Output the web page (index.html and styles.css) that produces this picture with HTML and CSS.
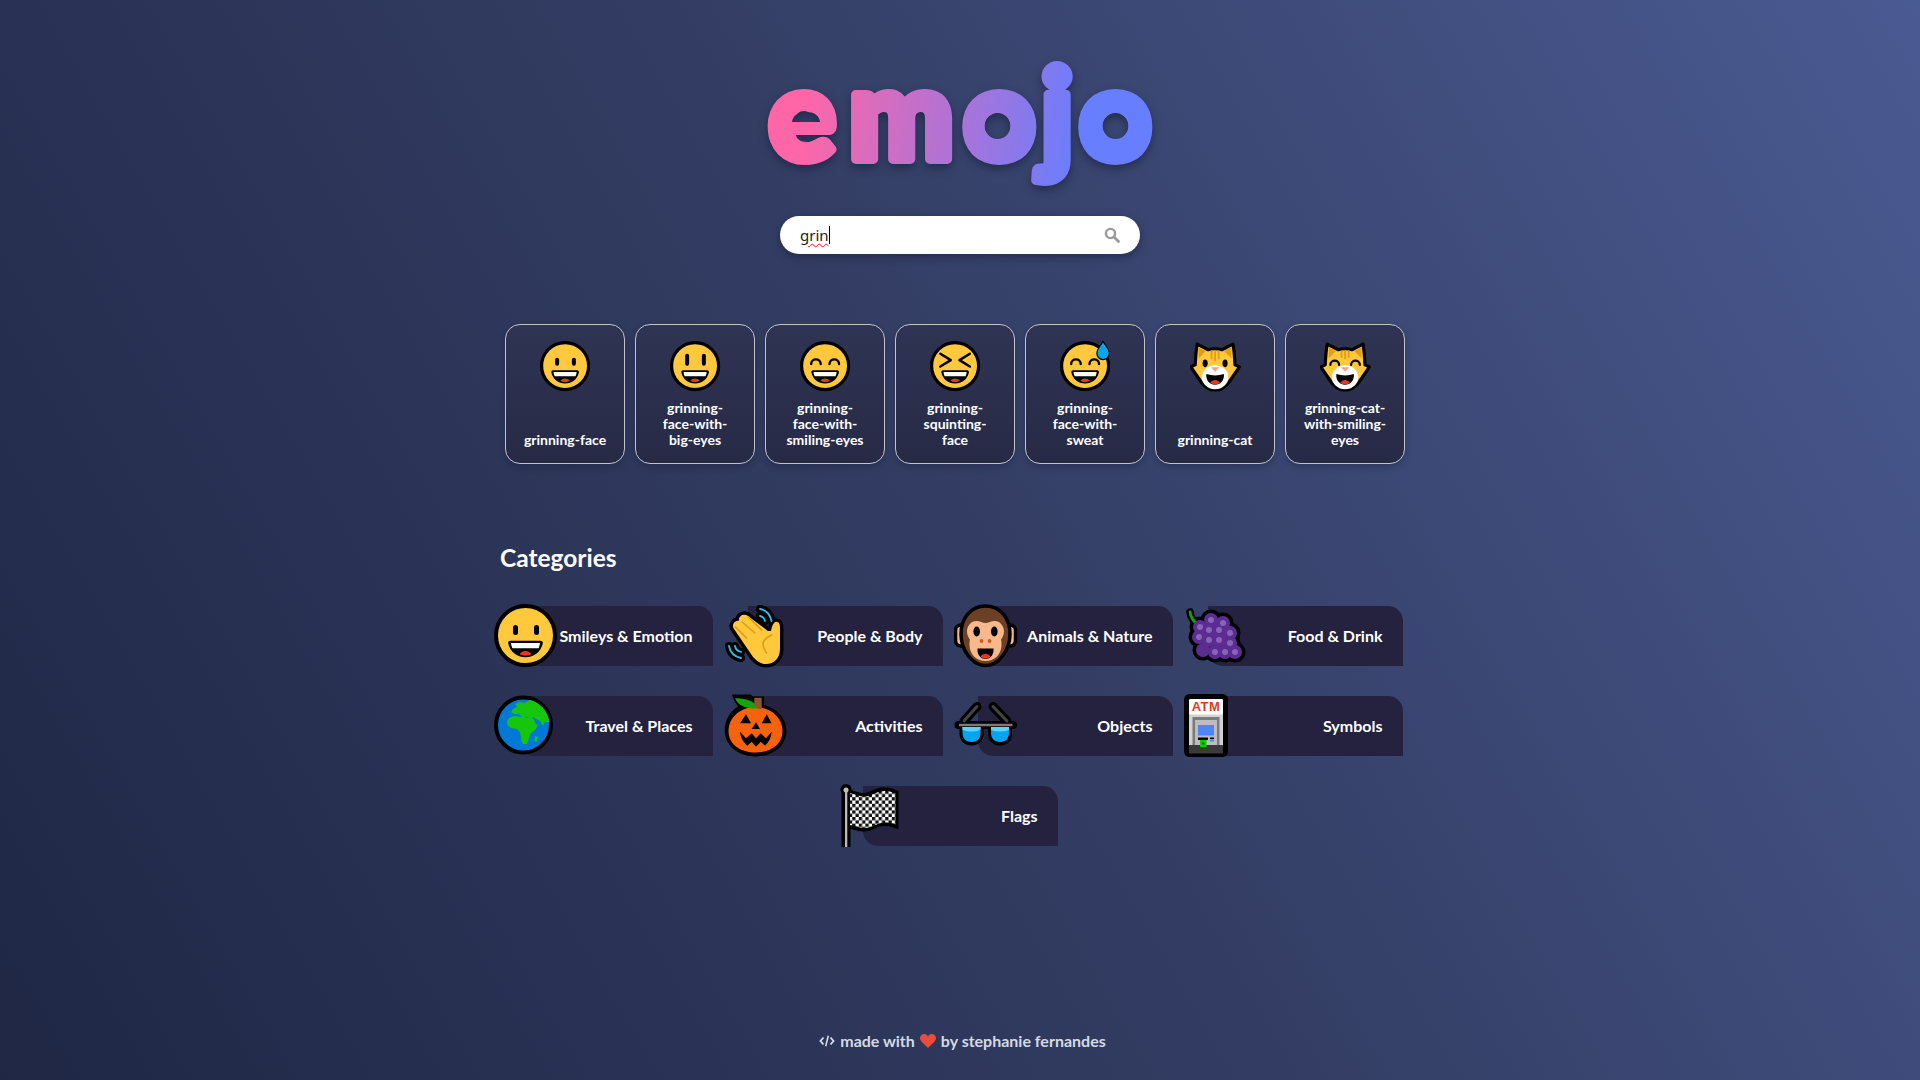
FILE: index.html
```html
<!DOCTYPE html>
<html lang="en">
<head>
<meta charset="utf-8">
<title>emojo</title>
<link rel="stylesheet" href="styles.css">
</head>
<body>
<svg class="defs" width="0" height="0" aria-hidden="true">
  <defs>
    <pattern id="check" width="6.6" height="6.6" patternUnits="userSpaceOnUse">
      <rect width="6.6" height="6.6" fill="#fff"/>
      <rect width="3.3" height="3.3" fill="#111"/>
      <rect x="3.3" y="3.3" width="3.3" height="3.3" fill="#111"/>
    </pattern>
    <clipPath id="globe"><circle cx="29.5" cy="31" r="26"/></clipPath>

    <symbol id="mouth" viewBox="0 0 64 64">
      <path d="M16.500 36.800h30c1.800 0 2.600 1.200 2.200 3-1.800 7.800-8.500 13.500-17.200 13.500s-15.400-5.700-17.200-13.500c-.4-1.800.4-3 2.200-3z" fill="#000"/>
      <path d="M17.500 39h28c.4 0 .6.300.5.700-.3 1.600-.8 3.100-1.400 4.500H18.400c-.6-1.400-1.100-2.900-1.400-4.500-.1-.4.100-.7.500-.7z" fill="#fff"/>
      <path d="M25.500 50c1.600-2 3.700-3 6-3s4.400 1 6 3c-1.800 1.100-3.800 1.700-6 1.700s-4.200-.6-6-1.700z" fill="#e5391f"/>
    </symbol>

    <symbol id="e-face" viewBox="0 0 64 64">
      <circle cx="31.500" cy="31.500" r="29.500" fill="#ffc83d" stroke="#000" stroke-width="4"/>
      <rect x="19" y="21" width="5" height="10" rx="2.500"/>
      <rect x="40" y="21" width="5" height="10" rx="2.500"/>
      <use href="#mouth" width="64" height="64"/>
    </symbol>
    <symbol id="e-bigeyes" viewBox="0 0 64 64">
      <circle cx="31.500" cy="31.500" r="29.500" fill="#ffc83d" stroke="#000" stroke-width="4"/>
      <rect x="19" y="16" width="5" height="15" rx="2.500"/>
      <rect x="40" y="16" width="5" height="15" rx="2.500"/>
      <use href="#mouth" width="64" height="64"/>
    </symbol>
    <symbol id="e-smile" viewBox="0 0 64 64">
      <circle cx="31.500" cy="31.500" r="29.500" fill="#ffc83d" stroke="#000" stroke-width="4"/>
      <path d="M14 29c0-8 12-8 12 0M37 29c0-8 12-8 12 0" fill="none" stroke="#000" stroke-width="3" stroke-linecap="round"/>
      <use href="#mouth" width="64" height="64"/>
    </symbol>
    <symbol id="e-squint" viewBox="0 0 64 64">
      <circle cx="31.500" cy="31.500" r="29.500" fill="#ffc83d" stroke="#000" stroke-width="4"/>
      <path d="M13 16l13 8-13 8M50 16l-13 8 13 8" fill="none" stroke="#000" stroke-width="3.200" stroke-linecap="round" stroke-linejoin="round"/>
      <use href="#mouth" width="64" height="64"/>
    </symbol>
    <symbol id="e-sweat" viewBox="0 0 64 64">
      <circle cx="31.500" cy="31.500" r="29.500" fill="#ffc83d" stroke="#000" stroke-width="4"/>
      <path d="M14 29c0-8 12-8 12 0M37 29c0-8 12-8 12 0" fill="none" stroke="#000" stroke-width="3" stroke-linecap="round"/>
      <use href="#mouth" width="64" height="64"/>
      <path d="M54 2c-3 5-7 9-7 13.500a7 7 0 0 0 14 0c0-4.500-4-8.500-7-13.500z" fill="#00a8e8" stroke="#000" stroke-width="3" paint-order="stroke"/>
    </symbol>
    <symbol id="e-cat" viewBox="0 0 64 64">
      <path d="M9 4l14 7c5-1.500 12-1.500 17 0l14-7c1.500 8 2 17 2.500 26L62 32.500 48 53c-4 5-10 8.500-16.500 8.500S19 58 15 53L1 32.500 6.500 30C7 21 7.500 12 9 4z" fill="#ffc83d" stroke="#000" stroke-width="4" stroke-linejoin="round"/>
      <path d="M11 8l9 4.500-9 9zM52 8l-9 4.500 9 9z" fill="#e59b12"/>
      <path d="M27 12v11M31.500 12v13M36 12v11" stroke="#e59b12" stroke-width="2.200"/>
      <ellipse cx="31.500" cy="45.500" rx="16.500" ry="15" fill="#fff"/>
      <ellipse cx="19" cy="28" rx="3.200" ry="4.800"/>
      <ellipse cx="44" cy="28" rx="3.200" ry="4.800"/>
      <path d="M26.500 33h10l-5 6z" fill="#f7a184"/>
      <path d="M20.500 41.500q11 3.500 22 0c1 8-4.500 13.500-11 13.500s-12-5.500-11-13.500z"/>
      <path d="M25.500 52.500c1.600-2.500 3.700-3.500 6-3.500s4.400 1 6 3.500c-1.800 1.500-3.800 2-6 2s-4.200-.5-6-2z" fill="#e5391f"/>
    </symbol>
    <symbol id="e-catsmile" viewBox="0 0 64 64">
      <path d="M9 4l14 7c5-1.500 12-1.500 17 0l14-7c1.500 8 2 17 2.500 26L62 32.500 48 53c-4 5-10 8.500-16.500 8.500S19 58 15 53L1 32.500 6.500 30C7 21 7.500 12 9 4z" fill="#ffc83d" stroke="#000" stroke-width="4" stroke-linejoin="round"/>
      <path d="M11 8l9 4.500-9 9zM52 8l-9 4.500 9 9z" fill="#e59b12"/>
      <path d="M27 12v9M31.500 12v11M36 12v9" stroke="#e59b12" stroke-width="2.200"/>
      <ellipse cx="31.500" cy="45.500" rx="16.500" ry="15" fill="#fff"/>
      <path d="M13 30c0-7 11-7 11 0M39 30c0-7 11-7 11 0" fill="none" stroke="#000" stroke-width="2.800" stroke-linecap="round"/>
      <path d="M26.500 33h10l-5 6z" fill="#f7a184"/>
      <path d="M20.500 41.500q11 3.500 22 0c1 8-4.500 13.500-11 13.500s-12-5.500-11-13.500z"/>
      <path d="M25.500 52.500c1.600-2.500 3.700-3.500 6-3.500s4.400 1 6 3.500c-1.800 1.500-3.800 2-6 2s-4.200-.5-6-2z" fill="#e5391f"/>
    </symbol>

    <symbol id="i-hand" viewBox="0 0 64 64">
      <g fill="none" stroke="#000" stroke-width="8" stroke-linecap="round">
        <path d="M36 5c6 1 10 5 11.500 12M36 12c2.500.5 4.500 2.500 5 5M5 42c1 6 5 10.500 12 12M11 42c.5 3 2.500 5 6 6"/>
      </g>
      <path d="M10 25C7 21 11 16 15 17 14 12 20 9 24 12L44 27 47 27C48 22 50 17 53 18 56 18 56 22 56 25V45C56 54 50 60 42 60 36 60 33 57 29 53Z" fill="#ffc83d" stroke="#000" stroke-width="7" stroke-linejoin="round" paint-order="stroke"/>
      <path d="M11.500 23l11 11M18 18l13 11M24.500 13l13 13M47.500 31c-6 3-9 6-8.500 10 .3 3 1.700 5 3.500 8" fill="none" stroke="#e09a14" stroke-width="1.500" stroke-linecap="round"/>
      <path d="M36 5c6 1 10 5 11.500 12M36 12c2.500.5 4.500 2.500 5 5M5 42c1 6 5 10.500 12 12M11 42c.5 3 2.500 5 6 6" fill="none" stroke="#2cbde8" stroke-width="1.800" stroke-linecap="round"/>
    </symbol>
    <symbol id="i-monkey" viewBox="0 0 64 64">
      <rect x="1.500" y="21" width="11" height="21" rx="5.500" fill="#f7b88b" stroke="#000" stroke-width="3.500"/>
      <rect x="50.500" y="21" width="11" height="21" rx="5.500" fill="#f7b88b" stroke="#000" stroke-width="3.500"/>
      <path d="M31.500 2C47 2 56 15 56 30 56 47 44 61.500 31.500 61.500S7 47 7 30C7 15 16 2 31.500 2Z" fill="#6b4024" stroke="#000" stroke-width="3.500"/>
      <path d="M22.500 17c3.500 0 6 2 9 2s5.500-2 9-2c5.500 0 9.500 5 9.500 10.500 0 3.500-1.500 6-3 8 .5 1.500.5 4 .5 5.500 0 9-6.500 16-16 16S15.500 50 15.500 41c0-1.500 0-4 .5-5.500-1.500-2-3-4.500-3-8C13 22 17 17 22.500 17Z" fill="#f7b88b"/>
      <ellipse cx="22.700" cy="27.500" rx="3.300" ry="5"/>
      <ellipse cx="40.300" cy="27.500" rx="3.300" ry="5"/>
      <circle cx="27.500" cy="37" r="1.900" fill="#d5582a"/>
      <circle cx="35.500" cy="37" r="1.900" fill="#d5582a"/>
      <path d="M23.500 44.500h16c.5 6-3 10.500-8 10.500s-8.500-4.500-8-10.500z"/>
      <path d="M26.500 52.500c1.500-2 3-2.800 5-2.800s3.500.8 5 2.800c-1.500 1.500-3 2.200-5 2.200s-3.500-.7-5-2.200z" fill="#e5391f"/>
    </symbol>
    <symbol id="i-grapes" viewBox="0 0 64 64">
      <path d="M6 8c.5 5 3 9 8 13" fill="none" stroke="#000" stroke-width="7.500" stroke-linecap="round"/>
      <g fill="#000" stroke="#000" stroke-width="7">
        <circle cx="16" cy="23" r="7"/><circle cx="27" cy="16" r="7"/><circle cx="39" cy="19" r="7"/>
        <circle cx="25" cy="26" r="7"/><circle cx="35" cy="26" r="7"/><circle cx="46" cy="29" r="7"/>
        <circle cx="15" cy="33" r="7"/><circle cx="25" cy="36" r="7"/><circle cx="35" cy="36" r="7"/><circle cx="46" cy="39" r="7"/>
        <circle cx="19" cy="46" r="7"/><circle cx="31" cy="48" r="7"/><circle cx="41" cy="48" r="7"/><circle cx="51" cy="48" r="7"/>
      </g>
      <path d="M6 8c.5 5 3 9 8 13" fill="none" stroke="#13a10e" stroke-width="2.800" stroke-linecap="round"/>
      <g fill="#5c2d91">
        <circle cx="16" cy="23" r="7"/><circle cx="27" cy="16" r="7"/><circle cx="39" cy="19" r="7"/>
        <circle cx="25" cy="26" r="7"/><circle cx="35" cy="26" r="7"/><circle cx="46" cy="29" r="7"/>
        <circle cx="15" cy="33" r="7"/><circle cx="25" cy="36" r="7"/><circle cx="35" cy="36" r="7"/><circle cx="46" cy="39" r="7"/>
        <circle cx="19" cy="46" r="7"/><circle cx="31" cy="48" r="7"/><circle cx="41" cy="48" r="7"/><circle cx="51" cy="48" r="7"/>
      </g>
      <g fill="#8764b8">
        <circle cx="16" cy="23" r="3"/><circle cx="27" cy="16" r="3"/><circle cx="39" cy="19" r="3"/>
        <circle cx="25" cy="26" r="3"/><circle cx="35" cy="26" r="3"/><circle cx="46" cy="29" r="3"/>
        <circle cx="15" cy="33" r="3"/><circle cx="25" cy="36" r="3"/><circle cx="35" cy="36" r="3"/><circle cx="46" cy="39" r="3"/>
        <circle cx="31" cy="48" r="3"/><circle cx="41" cy="48" r="3"/><circle cx="51" cy="48" r="3"/>
      </g>
    </symbol>
    <symbol id="i-earth" viewBox="0 0 64 64">
      <circle cx="29.500" cy="31" r="27.500" fill="#0078d7" stroke="#000" stroke-width="4"/>
      <g clip-path="url(#globe)" fill="#16c60c">
        <path d="M13 27l2-3 5-2 6 1 2-1 5 2 3-1 4 2 1 4 3 2-3 5-4 3-2 5-2 6-4 0-2-4-1-8-3-3-6-1-3-2-1-3z"/>
        <path d="M19 15l4-2-2-3 5-2 5 1 4-3 6-1 13 9 5 11-3 3-5 0-2 4-3-5-4-2-3-2-2 2-4-2-5 0-3-3-5 0-3-2z"/>
        <path d="M41 42l3 1-1.500 5-2-1z"/>
      </g>
    </symbol>
    <symbol id="i-pumpkin" viewBox="0 0 64 64">
      <path d="M8 .5h18.500l2.500 2h11V11C52 14 62.500 24 62.500 37 62.500 51 49 62.500 31.500 62.500S.7 51 .7 37C.7 24 8 16 14 12.500 11 8 8.500 4 8 .5Z" fill="#000"/>
      <path d="M31.500 13C46 13 58.500 23 58.500 37S46 58.500 31.500 58.500 4.500 51 4.500 37 17 13 31.500 13Z" fill="#f7630c"/>
      <path d="M11 4.300c9 0 19 2 24 10-9 1-20-.5-24-10z" fill="#16a30c"/>
      <path d="M30.300 3.700h7.400v11.500l-3.500-.5-3.900-4.500z" fill="#8e562e"/>
      <path d="M16 29.300l6-9 5 9zM37.700 29.300l5-9 5 9zM27.700 35l4.300-6.700 4 6.700z"/>
      <path d="M16 37.700l6 6.600 5.700-5 4.300 5 4.700-5 5.300 5 5.700-6.600c-.5 5.500-2.700 10.500-6.700 14l-4.300-4-4.700 5-4.300-5-4.400 4c-4-3.500-6.800-8.500-7.300-14z"/>
    </symbol>
    <symbol id="i-glasses" viewBox="0 0 64 64">
      <path d="M10 27L23 12.500M53 27L39 12.500" fill="none" stroke="#000" stroke-width="9" stroke-linecap="round"/>
      <path d="M4.500 31H59" fill="none" stroke="#000" stroke-width="8" stroke-linecap="round"/>
      <path d="M5.500 33h24v6.500c0 7-4.500 12-12 12s-12-5-12-12zM34 33h24v6.500c0 7-4.500 12-12 12s-12-5-12-12z" fill="#000"/>
      <path d="M10 27L23 12.500M53 27L39 12.500" fill="none" stroke="#444" stroke-width="3" stroke-linecap="round"/>
      <path d="M5 31H58.500" fill="none" stroke="#7a7a7a" stroke-width="2.600"/>
      <path d="M8.500 33h18v6c0 5-3 9-9 9s-9-4-9-9zM37 33h18v6c0 5-3 9-9 9s-9-4-9-9z" fill="#00a6f0"/>
      <path d="M8.500 33h18v3c-6 2-12 2-18 0zM37 33h18v3c-6 2-12 2-18 0z" fill="#5fd0ff"/>
    </symbol>
    <symbol id="i-atm" viewBox="0 0 64 64">
      <rect x="1.500" y="1.500" width="41" height="60" rx="4" fill="#000" stroke="#000" stroke-width="3"/>
      <rect x="5" y="5" width="34" height="47" rx="1.500" fill="#d2d2d2"/>
      <rect x="5" y="5" width="34" height="15.500" rx="1.500" fill="#fff"/>
      <text x="22" y="17" class="atm-text">ATM</text>
      <rect x="8.500" y="23" width="27" height="29" fill="#7b7b7b"/>
      <rect x="11" y="26" width="22" height="26" fill="#bdbdbd"/>
      <rect x="14" y="31" width="16" height="10.500" fill="#4a86f7"/>
      <rect x="14" y="43.500" width="10" height="2.500"/>
      <rect x="26" y="43.500" width="4" height="1.500"/>
      <rect x="26" y="45.500" width="4" height="2" fill="#4a86f7"/>
      <rect x="5" y="51" width="34" height="8.500" fill="#3a3a3a"/>
      <rect x="16" y="46" width="6.500" height="7" fill="#16c60c"/>
      <circle cx="19.200" cy="49.500" r="1.300" fill="#0c7a08"/>
    </symbol>
    <symbol id="i-flag" viewBox="0 0 64 64">
      <rect x="2.500" y="3" width="9" height="60" fill="#000"/>
      <circle cx="7" cy="5.500" r="5.500" fill="#000"/>
      <path d="M9 5.500c6 .5 11 4 17 3.500C32 8 37 3 46 3.500c5 .2 9 1.500 13.500 3.500V45.500c-5-2.500-9-3.500-14-3.500-8 0-12 5-19 5.500-6.500.5-12-2.500-17.500-3z" fill="#000"/>
      <path d="M11 9c5 1 10 4 16 3.500C33 11.500 38 7 46 7c4 0 7.500 1 10.500 2.500V40.500c-3-1.500-7-2-11-2-7 .5-12 5-18.500 5.500-5.500.3-10.500-2-16-3z" fill="url(#check)"/>
      <rect x="6" y="8" width="2.300" height="55" fill="#bababa"/>
      <circle cx="7" cy="6" r="2.500" fill="#bdbdbd"/>
    </symbol>
  </defs>
</svg>

<header class="brand">
  <svg class="logo" viewBox="0 0 400 150" width="400" height="150" role="img" aria-label="emojo">
    <defs>
      <linearGradient id="logograd" gradientUnits="userSpaceOnUse" x1="45" y1="60" x2="325" y2="100">
        <stop offset="0" stop-color="#ff66a8"/>
        <stop offset="1" stop-color="#667eff"/>
      </linearGradient>
      <mask id="logoholes" maskUnits="userSpaceOnUse" x="-20" y="-20" width="440" height="190">
        <rect x="-20" y="-20" width="440" height="190" fill="#fff"/>
        <circle cx="237.500" cy="76" r="13"/>
        <circle cx="355.500" cy="76" r="13"/>
        <path d="M32 72C33 65 38 62 46 62S59 65 60 72Z"/>
      </mask>
    </defs>
    <text class="logo-text" y="109" x="9 89 203.500 281 319.500" mask="url(#logoholes)">emojo</text>
    <circle class="logo-ring" cx="237.500" cy="76" r="19"/>
    <circle class="logo-ring" cx="355.500" cy="76" r="19"/>
  </svg>
  <div class="search">
    <span class="search-value">grin</span><span class="caret"></span>
    <svg class="search-icon" viewBox="0 0 16 16" width="16" height="16" aria-hidden="true">
      <circle cx="6.500" cy="6.500" r="4.600" fill="none" stroke="#9a9a9a" stroke-width="2.400"/>
      <path d="M10 10l4.500 4.500" stroke="#9a9a9a" stroke-width="2.800" stroke-linecap="round"/>
    </svg>
  </div>
</header>

<section class="results">
  <article class="card"><svg class="card-emoji"><use href="#e-face"/></svg><p class="card-label">grinning-face</p></article>
  <article class="card"><svg class="card-emoji"><use href="#e-bigeyes"/></svg><p class="card-label">grinning-face-with-big-eyes</p></article>
  <article class="card"><svg class="card-emoji"><use href="#e-smile"/></svg><p class="card-label">grinning-face-with-smiling-eyes</p></article>
  <article class="card"><svg class="card-emoji"><use href="#e-squint"/></svg><p class="card-label">grinning-squinting-face</p></article>
  <article class="card"><svg class="card-emoji"><use href="#e-sweat"/></svg><p class="card-label">grinning-face-with-sweat</p></article>
  <article class="card"><svg class="card-emoji"><use href="#e-cat"/></svg><p class="card-label">grinning-cat</p></article>
  <article class="card"><svg class="card-emoji"><use href="#e-catsmile"/></svg><p class="card-label">grinning-cat-with-smiling-eyes</p></article>
</section>

<section class="categories">
  <h2 class="categories-title">Categories</h2>
  <div class="category-grid">
    <a class="category"><svg class="category-icon"><use href="#e-face"/></svg><span>Smileys &amp; Emotion</span></a>
    <a class="category"><svg class="category-icon"><use href="#i-hand"/></svg><span>People &amp; Body</span></a>
    <a class="category"><svg class="category-icon"><use href="#i-monkey"/></svg><span>Animals &amp; Nature</span></a>
    <a class="category"><svg class="category-icon"><use href="#i-grapes"/></svg><span>Food &amp; Drink</span></a>
    <a class="category"><svg class="category-icon"><use href="#i-earth"/></svg><span>Travel &amp; Places</span></a>
    <a class="category"><svg class="category-icon"><use href="#i-pumpkin"/></svg><span>Activities</span></a>
    <a class="category"><svg class="category-icon"><use href="#i-glasses"/></svg><span>Objects</span></a>
    <a class="category"><svg class="category-icon"><use href="#i-atm"/></svg><span>Symbols</span></a>
    <a class="category"><svg class="category-icon"><use href="#i-flag"/></svg><span>Flags</span></a>
  </div>
</section>

<footer class="footer">
  <svg class="footer-code" viewBox="0 0 16 12" width="16" height="12" aria-hidden="true">
    <path d="M4.500 2.500L1.500 6l3 3.500M11.500 2.500l3 3.500-3 3.500" fill="none" stroke="#d5dae4" stroke-width="1.900"/>
    <path d="M9.300 .8L6.700 11.200" stroke="#d5dae4" stroke-width="1.600"/>
  </svg>
  <span>made with</span>
  <svg class="footer-heart" viewBox="0 0 16 14" width="16" height="14" aria-hidden="true">
    <path d="M8 14L1.400 7.400C-.5 5.500-.4 2.500 1.400 1 3.100-.4 5.700-.2 7.200 1.300L8 2.200l.8-.9C10.300-.2 12.900-.4 14.600 1c1.800 1.500 1.900 4.500 0 6.400z" fill="#e74c3c"/>
  </svg>
  <span>by stephanie fernandes</span>
</footer>
</body>
</html>
```
FILE: styles.css
```css
* { box-sizing: border-box; }

html, body { height: 100%; }

body {
  margin: 0;
  min-height: 100vh;
  display: flex;
  flex-direction: column;
  align-items: center;
  overflow: hidden;
  font-family: "Lato", "Liberation Sans", sans-serif;
  font-weight: 700;
  color: #fff;
  background: linear-gradient(60deg, #1f2745 0%, #333d63 50%, #4a5a92 100%);
}

.defs { position: absolute; }

.brand {
  display: flex;
  flex-direction: column;
  align-items: center;
  padding-top: 50px;
}

.logo {
  display: block;
  overflow: visible;
  filter: drop-shadow(0 4px 5px rgba(10, 15, 40, 0.45));
}

.logo-text {
  font-family: "Lato", sans-serif;
  font-weight: 900;
  font-size: 124px;
  fill: url(#logograd);
  stroke: url(#logograd);
  stroke-width: 10px;
  stroke-linejoin: round;
}

.logo-ring {
  fill: none;
  stroke: url(#logograd);
  stroke-width: 12px;
}

.search {
  position: relative;
  width: 360px;
  height: 38px;
  margin-top: 16px;
  padding-left: 20px;
  display: flex;
  align-items: center;
  background: #fff;
  border-radius: 19px;
  box-shadow: 0 3px 8px rgba(10, 15, 40, 0.4);
}

.search-value {
  font-family: "Noto Sans", sans-serif;
  font-weight: 400;
  font-size: 15px;
  color: #222;
  text-decoration: underline wavy #f01818 1px;
  text-underline-offset: 2px;
}

.caret {
  width: 1px;
  height: 18px;
  background: #000;
}

.search-icon {
  position: absolute;
  right: 20px;
  top: 11px;
}

.results {
  display: flex;
  gap: 10px;
  width: 910px;
  padding-right: 10px;
  margin-top: 70px;
}

.card {
  width: 120px;
  height: 140px;
  padding: 16px 16px 15px;
  display: flex;
  flex-direction: column;
  align-items: center;
  justify-content: space-between;
  border: 1px solid #c4c4c8;
  border-radius: 15px;
  background: linear-gradient(180deg, #2f3454 0%, #262a45 100%);
  box-shadow: 0 3px 6px rgba(10, 15, 40, 0.25);
}

.card-emoji {
  display: block;
  width: 51px;
  height: 51px;
  flex: none;
}

.card-label {
  margin: 0;
  width: 100%;
  font-size: 14px;
  line-height: 16px;
  text-align: center;
  overflow-wrap: break-word;
}

.categories {
  width: 920px;
  margin-top: 79px;
}

.categories-title {
  margin: 0;
  font-size: 24.500px;
  line-height: 30px;
  font-weight: 700;
}

.category-grid {
  display: flex;
  flex-wrap: wrap;
  justify-content: center;
  gap: 30px 35px;
  margin-top: 33px;
}

.category {
  position: relative;
  width: 195px;
  height: 60px;
  padding-right: 20px;
  padding-bottom: 2px;
  display: flex;
  align-items: center;
  justify-content: flex-end;
  font-size: 16px;
  background: #24223f;
  border-radius: 0 15px 0 15px;
}

.category-icon {
  position: absolute;
  left: -24px;
  top: -2px;
  width: 64px;
  height: 64px;
}

.atm-text {
  font-family: "Liberation Sans", sans-serif;
  font-weight: 700;
  font-size: 13px;
  letter-spacing: .5px;
  text-anchor: middle;
  fill: #e5391f;
}

.footer {
  margin-top: auto;
  padding-left: 5px;
  padding-bottom: 29px;
  display: flex;
  align-items: center;
  gap: 5px;
  font-size: 16px;
  line-height: 20px;
  color: #d5dae4;
}
```
